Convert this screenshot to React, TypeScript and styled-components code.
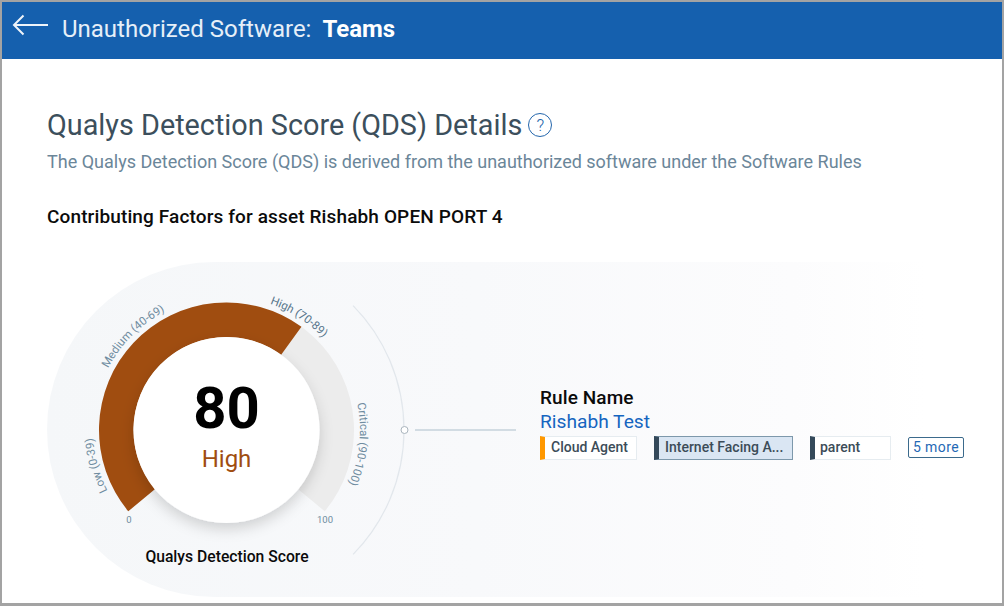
import React from "react";
import styled, { createGlobalStyle } from "styled-components";

const Global = createGlobalStyle`
  html, body { margin: 0; padding: 0; background: #fff; }
  body { font-family: Roboto, "Liberation Sans", sans-serif; }
`;

const Frame = styled.div`
  width: 1004px;
  height: 606px;
  box-sizing: border-box;
  border: solid #a3a3a3;
  border-width: 2px 2px 3px 2px;
  overflow: hidden;
  background: #fff;
`;

const Header = styled.header`
  height: 57px;
  background: #1560ae;
  display: flex;
  align-items: center;
  color: #e6eff8;
  padding-left: 10px;
`;

const BackIcon = styled.svg`
  width: 36px;
  height: 22px;
  margin-right: 14px;
  margin-top: -11px;
  flex: none;
`;

const HeaderTitle = styled.h1`
  margin: -4px 0 0;
  font-size: 24px;
  font-weight: 400;
  white-space: pre;
`;

const HeaderStrong = styled.strong`
  font-weight: 700;
  color: #fff;
  margin-left: 11px;
`;

const Body = styled.main`
  padding: 48px 0 0 45px;
`;

const TitleRow = styled.div`
  display: flex;
  align-items: center;
  gap: 6px;
  height: 36px;
`;

const Title = styled.h2`
  margin: 0;
  font-size: 28.8px;
  font-weight: 400;
  color: #3c4f5c;
  white-space: nowrap;
`;

const HelpIcon = styled.span`
  box-sizing: border-box;
  width: 24px;
  height: 24px;
  border: 1.5px solid #2466ac;
  border-radius: 50%;
  display: flex;
  align-items: center;
  justify-content: center;
  color: #2466ac;
  font-size: 17px;
  font-weight: 300;
`;

const Subtitle = styled.p`
  margin: 8px 0 0;
  font-size: 18px;
  line-height: 22px;
  color: #6b8699;
  white-space: nowrap;
`;

const Section = styled.h3`
  margin: 33px 0 0;
  font-size: 19px;
  letter-spacing: 0.13px;
  line-height: 22px;
  font-weight: 500;
  color: #0b0b0b;
  white-space: nowrap;
`;

const Panel = styled.section`
  margin-top: 34px;
  height: 335px;
  width: 955px;
  border-radius: 168px 0 0 168px;
  background: linear-gradient(90deg, #f5f7f9 0%, #f8f9fb 45%, #fcfcfd 78%, #ffffff 92%);
  display: flex;
  align-items: center;
`;

const GaugeBox = styled.div`
  position: relative;
  width: 493px;
  height: 335px;
  flex: none;
`;

const GaugeSvg = styled.svg`
  display: block;
`;

const Center = styled.div`
  position: absolute;
  left: 86px;
  top: 75px;
  width: 187px;
  height: 187px;
  display: flex;
  flex-direction: column;
  align-items: center;
`;

const Score = styled.div`
  font-size: 58px;
  line-height: 72px;
  font-weight: 700;
  color: #000;
  margin-top: 35px;
`;

const ScoreLabel = styled.div`
  font-size: 24px;
  line-height: 30px;
  color: #a04d10;
`;

const Caption = styled.div`
  position: absolute;
  left: 0;
  top: 286px;
  width: 360px;
  text-align: center;
  font-size: 15.7px;
  line-height: 18px;
  font-weight: 500;
  color: #0b0b0b;
`;

const Rule = styled.div`
  display: flex;
  flex-direction: column;
  padding-bottom: 14px;
`;

const RuleLabel = styled.div`
  font-size: 19px;
  letter-spacing: 0.1px;
  line-height: 24px;
  font-weight: 500;
  color: #0b0b0b;
`;

const RuleName = styled.div`
  font-size: 19.2px;
  line-height: 24px;
  color: #1565c0;
`;

const Tags = styled.div`
  display: flex;
  align-items: center;
  gap: 17px;
  margin-top: 2px;
`;

const Tag = styled.span<{ $bar: string; $w: number; $active?: boolean }>`
  box-sizing: border-box;
  width: ${(p) => p.$w}px;
  height: 24px;
  padding-left: ${(p) => (p.$w < 90 ? 5 : 6)}px;
  border: 1px solid ${(p) => (p.$active ? "#7d98ab" : "#e6ecf0")};
  border-left: 5px solid ${(p) => p.$bar};
  background: ${(p) => (p.$active ? "#dae6f3" : "#fff")};
  color: #3c4c58;
  font-size: 14px;
  font-weight: 500;
  line-height: 20px;
  white-space: nowrap;
  overflow: hidden;
`;

const More = styled.span`
  box-sizing: border-box;
  width: 56px;
  height: 21px;
  border: 1px solid #3b6a8c;
  border-radius: 2px;
  color: #1f69b5;
  font-size: 14px;
  letter-spacing: 0.4px;
  line-height: 19px;
  text-align: center;
`;

const CX = 179.5;
const CY = 168;

const pt = (deg: number, r: number) => {
  const a = (deg * Math.PI) / 180;
  return [CX + r * Math.sin(a), CY - r * Math.cos(a)];
};

const arcLine = (from: number, to: number, r: number) => {
  const [x1, y1] = pt(from, r);
  const [x2, y2] = pt(to, r);
  return `M${x1.toFixed(2)} ${y1.toFixed(2)}A${r} ${r} 0 ${to - from > 180 ? 1 : 0} 1 ${x2.toFixed(2)} ${y2.toFixed(2)}`;
};

const band = (from: number, to: number, r1: number, r2: number) => {
  const [x1, y1] = pt(from, r1);
  const [x2, y2] = pt(to, r1);
  const [x3, y3] = pt(to, r2);
  const [x4, y4] = pt(from, r2);
  const large = to - from > 180 ? 1 : 0;
  return `M${x1} ${y1}A${r1} ${r1} 0 ${large} 1 ${x2} ${y2}L${x3} ${y3}A${r2} ${r2} 0 ${large} 0 ${x4} ${y4}Z`;
};

const LABELS = [
  { id: "low", text: "Low (0-39)", from: -117, to: -70, fill: "#6f8ca0" },
  { id: "med", text: "Medium (40-69)", from: -62.5, to: 0, fill: "#6f8ca0" },
  { id: "high", text: "High (70-89)", from: 19, to: 70, fill: "#56758b" },
  { id: "crit", text: "Critical (90-100)", from: 78.5, to: 140, fill: "#6f8ca0" },
];

const Gauge = () => (
  <GaugeSvg width="493" height="335" viewBox="0 0 493 335">
    <defs>
      <filter id="drop" x="-30%" y="-30%" width="160%" height="160%">
        <feDropShadow dx="0" dy="6" stdDeviation="7" floodColor="#000" floodOpacity="0.16" />
      </filter>
      {LABELS.map((l) => (
        <path key={l.id} id={l.id} d={arcLine(l.from, l.to, 133.5)} />
      ))}
    </defs>
    <path d={band(-129.6, 129.6, 127.5, 93)} fill="#ececec" />
    <path d={band(-129.6, 36, 127.5, 93)} fill="#a04d10" />
    <circle cx={CX} cy={CY} r={93} fill="#fff" filter="url(#drop)" />
    {LABELS.map((l) => (
      <text key={l.id} fontFamily="Roboto, sans-serif" fontSize="11.5" fill={l.fill}>
        <textPath href={`#${l.id}`}>{l.text}</textPath>
      </text>
    ))}
    <text x="82" y="261" fontFamily="Roboto, sans-serif" fontSize="9.5" fill="#6f8ca0" textAnchor="middle">0</text>
    <text x="278" y="261" fontFamily="Roboto, sans-serif" fontSize="9.5" fill="#6f8ca0" textAnchor="middle">100</text>
    <path d={arcLine(45.5, 134.5, 177.5)} fill="none" stroke="#e2e7ec" strokeWidth="1.2" />
    <circle cx="357.5" cy="168" r="3.5" fill="#fff" stroke="#a9b4bd" strokeWidth="1" />
    <line x1="368" y1="168" x2="469" y2="168" stroke="#c6d2db" strokeWidth="1.5" />
  </GaugeSvg>
);

export default function App() {
  return (
    <Frame>
      <Global />
      <Header>
        <BackIcon viewBox="0 0 36 22" fill="none" stroke="#eef4fa" strokeWidth="2">
          <path d="M36 11H2M11.500 1.500 2 11l9.500 9.500" />
        </BackIcon>
        <HeaderTitle>
          Unauthorized Software:
          <HeaderStrong>Teams</HeaderStrong>
        </HeaderTitle>
      </Header>
      <Body>
        <TitleRow>
          <Title>Qualys Detection Score (QDS) Details</Title>
          <HelpIcon>?</HelpIcon>
        </TitleRow>
        <Subtitle>The Qualys Detection Score (QDS) is derived from the unauthorized software under the Software Rules</Subtitle>
        <Section>Contributing Factors for asset Rishabh OPEN PORT 4</Section>
        <Panel>
          <GaugeBox>
            <Gauge />
            <Center>
              <Score>80</Score>
              <ScoreLabel>High</ScoreLabel>
            </Center>
            <Caption>Qualys Detection Score</Caption>
          </GaugeBox>
          <Rule>
            <RuleLabel>Rule Name</RuleLabel>
            <RuleName>Rishabh Test</RuleName>
            <Tags>
              <Tag $bar="#ff9800" $w={97}>Cloud Agent</Tag>
              <Tag $bar="#34495a" $w={139} $active>Internet Facing A...</Tag>
              <Tag $bar="#34495a" $w={81}>parent</Tag>
              <More>5 more</More>
            </Tags>
          </Rule>
        </Panel>
      </Body>
    </Frame>
  );
}
